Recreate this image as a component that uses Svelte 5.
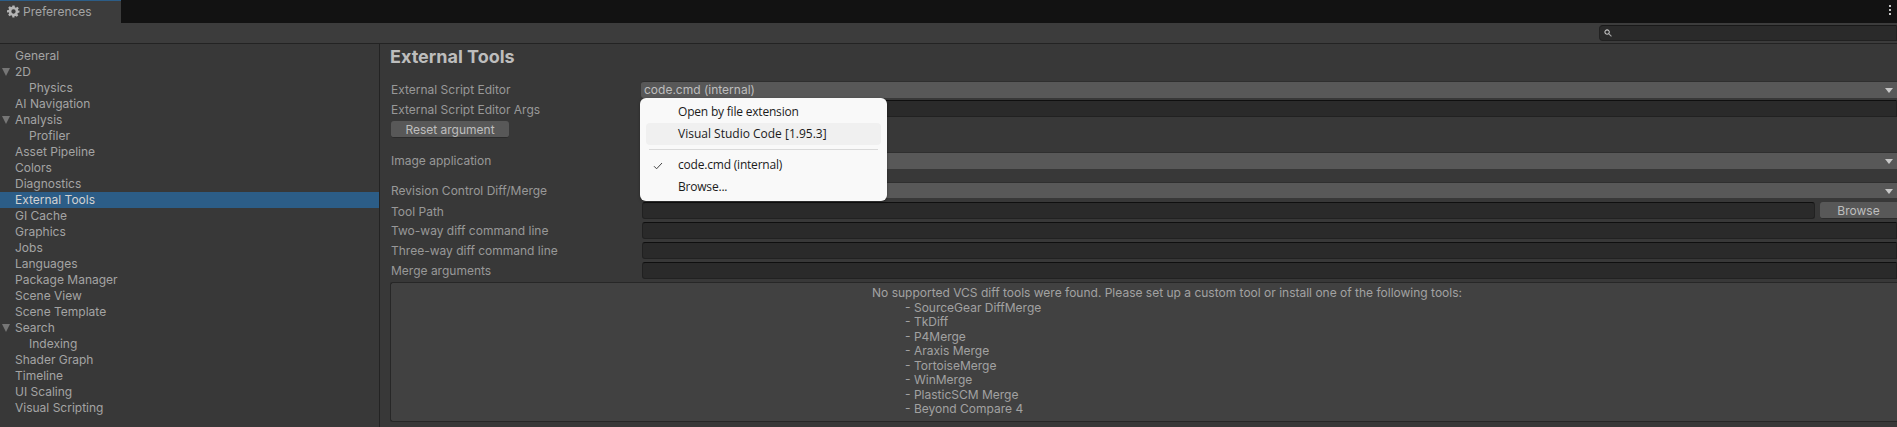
<script>
  const categories = [
    { name: "General" },
    { name: "2D", open: true },
    { name: "Physics", child: true },
    { name: "AI Navigation" },
    { name: "Analysis", open: true },
    { name: "Profiler", child: true },
    { name: "Asset Pipeline" },
    { name: "Colors" },
    { name: "Diagnostics" },
    { name: "External Tools", selected: true },
    { name: "GI Cache" },
    { name: "Graphics" },
    { name: "Jobs" },
    { name: "Languages" },
    { name: "Package Manager" },
    { name: "Scene View" },
    { name: "Scene Template" },
    { name: "Search", open: true },
    { name: "Indexing", child: true },
    { name: "Shader Graph" },
    { name: "Timeline" },
    { name: "UI Scaling" },
    { name: "Visual Scripting" }
  ];

  const diffTools = [
    "SourceGear DiffMerge",
    "TkDiff",
    "P4Merge",
    "Araxis Merge",
    "TortoiseMerge",
    "WinMerge",
    "PlasticSCM Merge",
    "Beyond Compare 4"
  ];
</script>

<div class="window">
  <header class="tabbar">
    <div class="tab">
      <svg class="gear" viewBox="0 0 24 24" width="13" height="13">
        <path
          fill="#b4b4b4"
          d="M10 1h4l.6 3.1 1.9.8 2.6-1.8 2.8 2.8-1.8 2.6.8 1.9L23 10v4l-3.1.6-.8 1.9 1.8 2.6-2.8 2.8-2.6-1.8-1.9.8L13.9 23h-4l-.5-3.1-1.9-.8-2.6 1.8-2.8-2.8 1.8-2.6-.8-1.9L0 13.9v-4l3.1-.5.8-1.9-1.8-2.6 2.8-2.8 2.6 1.8 1.9-.8zM12 8a4 4 0 1 0 0 8 4 4 0 0 0 0-8z"
        />
      </svg>
      <span>Preferences</span>
    </div>
    <div class="kebab"><i></i><i></i><i></i></div>
  </header>

  <div class="toolbar">
    <div class="search">
      <svg viewBox="0 0 9 9" width="8" height="8">
        <circle cx="3.5" cy="3.5" r="2.5" fill="none" stroke="#c4c4c4" stroke-width="1.2" />
        <path d="M5.5 5.5L8.4 8.4" stroke="#a8a8a8" stroke-width="1.2" />
      </svg>
    </div>
  </div>

  <div class="body">
    <nav class="sidebar">
      {#each categories as cat}
        <div class="cat" class:selected={cat.selected} class:child={cat.child}>
          {#if cat.open}<span class="fold"></span>{/if}
          {cat.name}
        </div>
      {/each}
    </nav>

    <main class="content">
      <h1>External Tools</h1>

      <div class="row first">
        <label>External Script Editor</label>
        <div class="dropdown">code.cmd (internal)<span class="caret"></span></div>
      </div>
      <div class="row args">
        <label>External Script Editor Args</label>
        <div class="field"></div>
      </div>
      <button class="reset">Reset argument</button>

      <div class="row image">
        <label>Image application</label>
        <div class="dropdown"><span class="caret"></span></div>
      </div>
      <div class="row revision">
        <label>Revision Control Diff/Merge</label>
        <div class="dropdown short"><span class="caret"></span></div>
      </div>
      <div class="row tool">
        <label>Tool Path</label>
        <div class="field"></div>
        <button class="browse">Browse</button>
      </div>
      <div class="row">
        <label>Two-way diff command line</label>
        <div class="field"></div>
      </div>
      <div class="row">
        <label>Three-way diff command line</label>
        <div class="field"></div>
      </div>
      <div class="row">
        <label>Merge arguments</label>
        <div class="field"></div>
      </div>

      <div class="helpbox">
        <div class="helptext">
          <p>No supported VCS diff tools were found. Please set up a custom tool or install one of the following tools:</p>
          {#each diffTools as tool}
            <p class="tool-item">- {tool}</p>
          {/each}
        </div>
      </div>

      <!-- native windows popup on top of the dropdown -->
      <div class="popup">
        <div class="item">Open by file extension</div>
        <div class="item hover">Visual Studio Code [1.95.3]</div>
        <div class="sep"></div>
        <div class="item">
          <svg class="check" viewBox="0 0 10 8" width="10" height="8">
            <path d="M1 4.2L3.6 6.8L9 1" fill="none" stroke="#444" stroke-width="1" />
          </svg>
          code.cmd (internal)
        </div>
        <div class="item">Browse...</div>
      </div>
    </main>
  </div>
</div>

<style>
  :global(body) {
    background: #383838;
    overflow: hidden;
  }

  .window {
    height: 427px;
    display: flex;
    flex-direction: column;
    overflow: hidden;
    font-family: Inter, "Liberation Sans", sans-serif;
    font-size: 12px;
    color: #a4a4a4;
  }

  .tabbar {
    height: 23px;
    flex: none;
    background: #121212;
    display: flex;
    justify-content: space-between;
  }

  .tab {
    width: 121px;
    box-sizing: border-box;
    background: #3c3c3c;
    border-top: 1px solid #2c5d87;
    padding: 0 0 2px 7px;
    display: flex;
    align-items: center;
    gap: 3px;
    color: #a4a4a4;
  }

  .gear {
    flex: none;
  }

  .kebab {
    width: 3px;
    margin: 5px 5px 0 0;
    display: flex;
    flex-direction: column;
    gap: 2px;
  }

  .kebab i {
    width: 2px;
    height: 2px;
    background: #c4c4c4;
  }

  .toolbar {
    height: 20px;
    flex: none;
    box-sizing: content-box;
    background: #3c3c3c;
    border-bottom: 1px solid #232323;
    display: flex;
    justify-content: flex-end;
    align-items: center;
  }

  .search {
    width: 298px;
    height: 16px;
    box-sizing: border-box;
    background: #2a2a2a;
    border: 1px solid #212121;
    border-top-color: #191919;
    border-radius: 4px 0 0 4px;
    padding-left: 4px;
    display: flex;
    align-items: center;
  }

  .body {
    flex: 1;
    display: flex;
    min-height: 0;
  }

  .sidebar {
    width: 379px;
    flex: none;
    box-sizing: content-box;
    border-right: 1px solid #232323;
    padding-top: 4px;
  }

  .cat {
    position: relative;
    height: 16px;
    line-height: 16px;
    padding-left: 15px;
    white-space: nowrap;
  }

  .cat.child {
    padding-left: 29px;
  }

  .cat.selected {
    background: #2c5d87;
    color: #d2d2d2;
  }

  .fold {
    position: absolute;
    left: 2px;
    top: 4px;
    border-left: 4.5px solid transparent;
    border-right: 4.5px solid transparent;
    border-top: 8px solid #767676;
  }

  .content {
    position: relative;
    flex: 1;
    min-width: 0;
    padding-left: 10px;
  }

  h1 {
    margin: 0;
    height: 26px;
    padding-top: 1px;
    font-size: 18px;
    line-height: 24px;
    font-weight: 700;
    color: #bdbdbd;
  }

  .row {
    display: flex;
    height: 17px;
    margin-top: 3px;
  }

  .row label {
    width: 251px;
    flex: none;
    padding-left: 1px;
    box-sizing: border-box;
    line-height: 17px;
    color: #989898;
    white-space: nowrap;
  }

  .row.first {
    margin-top: 10px;
  }

  .row.args {
    margin-top: 2px;
  }

  .row.args label,
  .row.tool label {
    line-height: 19px;
  }

  .row.image {
    margin-top: 14px;
  }

  .row.revision {
    margin-top: 13px;
  }

  .row.tool {
    margin-top: 3px;
  }

  .dropdown {
    flex: 1;
    position: relative;
    background: #585858;
    border-top: 1px solid #2f2f2f;
    border-radius: 3px 0 0 3px;
    padding-left: 3px;
    line-height: 16px;
    color: #bebebe;
    height: 16px;
  }

  .dropdown.short {
    height: 15px;
  }

  .caret {
    position: absolute;
    right: 4px;
    top: 6px;
    border-left: 4px solid transparent;
    border-right: 4px solid transparent;
    border-top: 5px solid #c8c8c8;
  }

  .field {
    flex: 1;
    margin-left: 1px;
    box-sizing: border-box;
    background: #2a2a2a;
    border: 1px solid #212121;
    border-top-color: #0f0f0f;
    border-radius: 3px 0 0 3px;
  }

  .tool .field {
    border-radius: 3px;
  }

  button {
    font: inherit;
    border: 0;
    padding: 0;
    background: #585858;
    color: #bebebe;
    border-bottom: 1px solid #2b2b2b;
    border-radius: 3px;
  }

  .reset {
    display: block;
    width: 118px;
    height: 17px;
    margin: 4px 0 0 1px;
  }

  .browse {
    width: 77px;
    height: 17px;
    margin-left: 5px;
    border-radius: 3px 0 0 3px;
  }

  .helpbox {
    margin-top: 3px;
    height: 140px;
    box-sizing: border-box;
    background: #414141;
    border: 1px solid #272727;
    border-right: 0;
    border-radius: 3px 0 0 3px;
    padding: 3px 0 0 46px;
    display: flex;
    justify-content: center;
  }

  .helptext {
    color: #a2a2a2;
    line-height: 14.5px;
    white-space: nowrap;
  }

  .helptext p {
    margin: 0;
  }

  .tool-item {
    padding-left: 33px;
  }

  .popup {
    position: absolute;
    left: 260px;
    top: 54px;
    width: 247px;
    height: 103px;
    box-sizing: border-box;
    padding: 3px 6px 0;
    background: #f9f9f9;
    border-radius: 6px;
    box-shadow: 0 1px 3px rgba(0, 0, 0, 0.35);
    font-family: "Open Sans", "Noto Sans", sans-serif;
    font-size: 12px;
    color: #1b1b1b;
    letter-spacing: -0.2px;
  }

  .item {
    position: relative;
    height: 22px;
    line-height: 22px;
    padding-left: 32px;
    border-radius: 4px;
    white-space: nowrap;
  }

  .item.hover {
    background: #f0f0f0;
    letter-spacing: 0;
  }

  .check {
    position: absolute;
    left: 7px;
    top: 8px;
  }

  .sep {
    height: 1px;
    margin: 4px 3px 4px;
    background: #d9d9d9;
  }
</style>
